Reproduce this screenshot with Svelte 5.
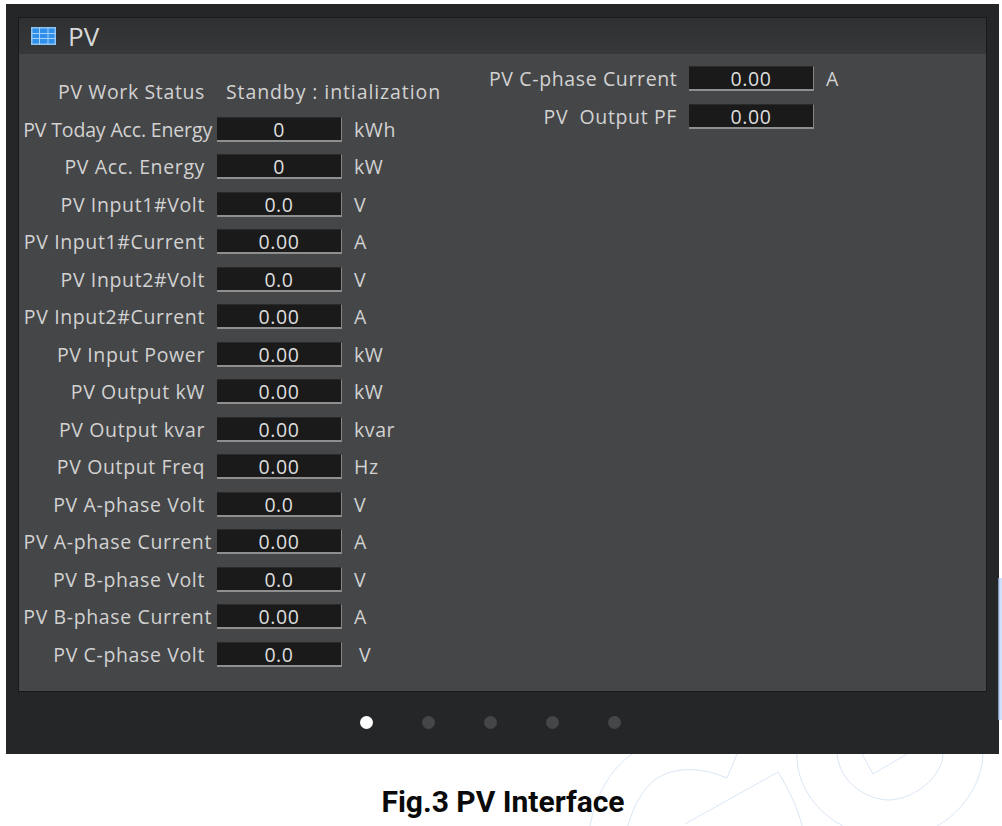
<script>
  const left = [
    { label: 'PV Today Acc. Energy', value: '0', unit: 'kWh', long: true, tight: true },
    { label: 'PV Acc. Energy', value: '0', unit: 'kW' },
    { label: 'PV Input1#Volt', value: '0.0', unit: 'V' },
    { label: 'PV Input1#Current', value: '0.00', unit: 'A' },
    { label: 'PV Input2#Volt', value: '0.0', unit: 'V' },
    { label: 'PV Input2#Current', value: '0.00', unit: 'A' },
    { label: 'PV Input Power', value: '0.00', unit: 'kW' },
    { label: 'PV Output kW', value: '0.00', unit: 'kW' },
    { label: 'PV Output kvar', value: '0.00', unit: 'kvar' },
    { label: 'PV Output Freq', value: '0.00', unit: 'Hz' },
    { label: 'PV A-phase Volt', value: '0.0', unit: 'V' },
    { label: 'PV A-phase Current', value: '0.00', unit: 'A', long: true },
    { label: 'PV B-phase Volt', value: '0.0', unit: 'V' },
    { label: 'PV B-phase Current', value: '0.00', unit: 'A', long: true },
    { label: 'PV C-phase Volt', value: '0.0', unit: 'V', far: true }
  ];
  const right = [
    { label: 'PV C-phase Current', value: '0.00', unit: 'A' },
    { label: 'PV\u00a0 Output PF', value: '0.00', unit: '' }
  ];
</script>

<div class="page">
  <svg class="watermark" width="500" height="72" viewBox="0 0 500 72" fill="none" aria-hidden="true">
    <path d="M132 0C110 16 96 40 90 72" />
    <path d="M237 0L227 24C200 12 168 12 150 30C140 40 132 56 128 72" />
    <path d="M185 70L278 18C288 34 298 54 302 72" />
    <path d="M297 0C296 30 316 58 343 72" />
    <path d="M337 0C340 30 368 46 390 46C418 44 443 20 443 0" />
    <path d="M362 0L373 20L407 0" />
    <path d="M483 0C482 30 462 58 437 72" />
  </svg>
  <div class="frame">
    <section class="panel">
      <header class="title">
        <svg width="25" height="18" viewBox="0 0 25 18" aria-hidden="true">
          <rect x="0" y="0" width="25" height="18" fill="#8cc4f4" />
          <rect x="1.5" y="1.5" width="22" height="15" fill="#2f8fea" />
          <path d="M0 6.5H25M0 11.5H25M8.5 1V17M17 1V17" stroke="#a5d2f7" stroke-width="1" />
        </svg>
        <span>PV</span>
      </header>
      <div class="body">
        <div class="col">
          <div class="row status">
            <span class="label">PV Work Status</span>
            <span class="state">Standby : intialization</span>
          </div>
          {#each left as r}
            <div class="row">
              <span class="label" class:long={r.long} class:tight={r.tight}>{r.label}</span>
              <span class="field">{r.value}</span>
              <span class="unit" class:far={r.far}>{r.unit}</span>
            </div>
          {/each}
        </div>
        <div class="col side">
          {#each right as r}
            <div class="row">
              <span class="label">{r.label}</span>
              <span class="field">{r.value}</span>
              <span class="unit">{r.unit}</span>
            </div>
          {/each}
        </div>
      </div>
    </section>
    <nav class="dots">
      <i class="on"></i><i></i><i></i><i></i><i></i>
    </nav>
  </div>
  <div class="strip"></div>
  <h1>Fig.3 PV Interface</h1>
</div>

<style>
  :global(body) { margin: 0; background: #fff; }
  .page {
    position: relative;
    width: 1002px;
    height: 826px;
    overflow: hidden;
    padding: 4px 0 0 6px;
    box-sizing: border-box;
    font-family: "Open Sans", sans-serif;
  }
  .watermark { position: absolute; left: 500px; top: 754px; }
  .watermark path { stroke: #d9e6f6; stroke-width: 1; }
  .strip {
    position: absolute;
    left: 998px;
    top: 578px;
    width: 4px;
    height: 142px;
    background: linear-gradient(90deg, #5c79a8, #cfe0fb 45%);
  }
  .frame {
    position: relative;
    width: 993px;
    height: 750px;
    box-sizing: border-box;
    padding: 13px 12px 0;
    background: #252628;
    display: flex;
    flex-direction: column;
  }
  .panel {
    height: 675px;
    box-sizing: border-box;
    background: #454648;
    border: 1px solid #18191a;
    display: flex;
    flex-direction: column;
  }
  .title {
    height: 36px;
    flex: none;
    background: linear-gradient(#2f3031, #373839);
    display: flex;
    align-items: center;
    gap: 12px;
    padding-left: 12px;
    color: #d8d8d8;
    font-size: 26px;
  }
  .body {
    flex: 1;
    display: flex;
    color: #d2d2d2;
    font-size: 19.5px;
  }
  .col {
    width: 439px;
    padding-top: 25px;
    display: flex;
    flex-direction: column;
    gap: 12.5px;
  }
  .col.side {
    width: auto;
    padding-top: 12px;
    margin-left: 31px;
    gap: 13px;
  }
  .side .label { width: 188px; }
  .row {
    height: 25px;
    display: flex;
    align-items: center;
    white-space: nowrap;
  }
  .label {
    width: 186px;
    flex: none;
    text-align: right;
    margin-right: 12px;
    letter-spacing: 0.63px;
  }
  .label.long { margin-right: 5px; width: 193px; }
  .label.tight { letter-spacing: -0.15px; }
  .field {
    width: 125px;
    height: 25px;
    flex: none;
    box-sizing: border-box;
    background: #1a1a1b;
    border-right: 1px solid #858585;
    border-bottom: 2px solid #8f8f8f;
    border-top: 1px solid #2a2a2a;
    color: #dedede;
    text-align: center;
    line-height: 24px;
    letter-spacing: 0.6px;
  }
  .unit { margin-left: 12px; letter-spacing: 0.6px; }
  .unit.far { margin-left: 17px; }
  .state { margin-left: 9px; letter-spacing: 0.9px; }
  .dots {
    flex: 1;
    display: flex;
    justify-content: center;
    align-items: center;
    gap: 49px;
    padding-right: 24px;
    padding-bottom: 2px;
  }
  .dots i {
    width: 13px;
    height: 13px;
    border-radius: 50%;
    background: #454648;
  }
  .dots i.on { background: #fff; }
  h1 {
    margin: 30px 0 0;
    width: 994px;
    text-align: center;
    font-family: Roboto, sans-serif;
    font-size: 30px;
    line-height: 36px;
    font-weight: 700;
    color: #0a0a0a;
    position: relative;
  }
</style>
